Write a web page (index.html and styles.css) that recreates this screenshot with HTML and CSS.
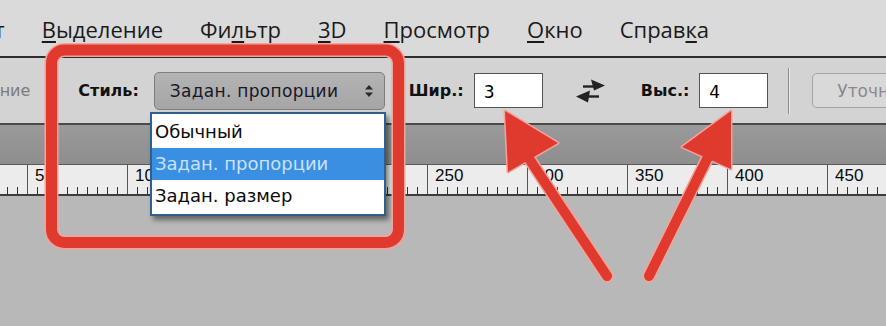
FILE: index.html
```html
<!DOCTYPE html>
<html lang="ru">
<head>
<meta charset="utf-8">
<link rel="stylesheet" href="styles.css">
</head>
<body>
<div class="screen">
  <nav class="menubar">
    <span class="menu-item first">Текст</span>
    <span class="menu-item"><u>В</u>ыделение</span>
    <span class="menu-item">Фи<u>л</u>ьтр</span>
    <span class="menu-item"><u>3</u>D</span>
    <span class="menu-item"><u>П</u>росмотр</span>
    <span class="menu-item"><u>О</u>кно</span>
    <span class="menu-item">Справ<u>к</u>а</span>
  </nav>

  <div class="options">
    <span class="opt-label disabled first">Сглаживание</span>
    <span class="opt-label style-label">Стиль:</span>
    <div class="select">
      <span class="select-text">Задан. пропорции</span>
      <svg class="updown" width="10" height="16" viewBox="0 0 10 16"><path d="M1 6.5 L5 2 L9 6.5 Z M1 9.5 L5 14 L9 9.5 Z" fill="#2a2a2a"/></svg>
    </div>
    <span class="opt-label w-label">Шир.:</span>
    <div class="field">3</div>
    <svg class="swap" width="32" height="26" viewBox="0 0 32 26">
      <path d="M8 8.5 H21" stroke="#222" stroke-width="2.4" fill="none"/>
      <path d="M16 1.5 L30 7.5 L19 12.5 Z" fill="#222"/>
      <path d="M24 18.5 H11" stroke="#222" stroke-width="2.4" fill="none"/>
      <path d="M15 12.5 L1 18.5 L13 24.5 Z" fill="#222"/>
    </svg>
    <span class="opt-label h-label">Выс.:</span>
    <div class="field">4</div>
    <span class="separator"></span>
    <span class="refine">Уточнить край...</span>
  </div>

  <div class="band"></div>

  <div class="ruler">
    <div class="ticks"></div>
    <span class="rlabel">50</span>
    <span class="rlabel">100</span>
    <span class="rlabel">150</span>
    <span class="rlabel">200</span>
    <span class="rlabel">250</span>
    <span class="rlabel">300</span>
    <span class="rlabel">350</span>
    <span class="rlabel">400</span>
    <span class="rlabel">450</span>
  </div>

  <div class="canvas"></div>

  <ul class="dropdown">
    <li class="dd-item">Обычный</li>
    <li class="dd-item active">Задан. пропорции</li>
    <li class="dd-item">Задан. размер</li>
  </ul>

  <svg class="annotation" width="886" height="326" viewBox="0 0 886 326">
    <g fill="none" stroke-linecap="round" stroke-linejoin="round">
      <rect x="51.5" y="50" width="347" height="192.5" rx="13" stroke="#f2a49c" stroke-width="14"/>
      <line x1="607" y1="276" x2="528" y2="157" stroke="#f2a49c" stroke-width="13"/>
      <line x1="649" y1="276" x2="708" y2="157" stroke="#f2a49c" stroke-width="13"/>
    </g>
    <polygon points="505,111 508,172 558,143" fill="#f2a49c" stroke="#f2a49c" stroke-width="3" stroke-linejoin="round"/>
    <polygon points="731,111 682,147 731,169" fill="#f2a49c" stroke="#f2a49c" stroke-width="3" stroke-linejoin="round"/>
    <g fill="none" stroke="#e03a2f" stroke-linecap="round" stroke-linejoin="round">
      <rect x="51.5" y="50" width="347" height="192.5" rx="13" stroke-width="11"/>
      <line x1="607" y1="276" x2="528" y2="157" stroke-width="10"/>
      <line x1="649" y1="276" x2="708" y2="157" stroke-width="10"/>
    </g>
    <polygon points="505,111 508,172 558,143" fill="#e03a2f"/>
    <polygon points="731,111 682,147 731,169" fill="#e03a2f"/>
  </svg>
</div>
</body>
</html>
```

FILE: styles.css
```css
* { box-sizing: border-box; }
html, body { margin: 0; padding: 0; }
body { width: 886px; height: 326px; overflow: hidden; background: #b8b8b8; }

.screen {
  position: relative;
  width: 886px;
  height: 326px;
  overflow: hidden;
  display: flex;
  flex-direction: column;
  background: #b8b8b8;
}

/* ---------- menu bar ---------- */
.menubar {
  height: 58px;
  flex: none;
  display: flex;
  align-items: center;
  gap: 37px;
  padding-top: 2px;
  background: #dadada;
  border-bottom: 2px solid #2e2e2e;
  font-family: "Open Sans", "Noto Sans", sans-serif;
  font-size: 22px;
  color: #1a1a1a;
  white-space: nowrap;
}
.menubar > * { flex: none; }
.menu-item u { text-decoration-thickness: 2px; text-underline-offset: 3px; }
.menu-item.first { margin-left: -52px; }

/* ---------- options bar ---------- */
.options {
  height: 67px;
  flex: none;
  display: flex;
  align-items: center;
  background: #d3d3d3;
  border-bottom: 2px solid #4a4a4a;
  font-family: "DejaVu Sans", sans-serif;
  font-size: 16px;
  color: #111;
  white-space: nowrap;
}
.options > * { flex: none; }
.opt-label { font-weight: bold; }
.opt-label.disabled { font-weight: normal; color: #7c7c7c; }
.opt-label.first { margin-left: -84px; }
.style-label { margin-left: 48px; }
.select {
  margin-left: 15px;
  width: 231px;
  height: 38px;
  display: flex;
  align-items: center;
  justify-content: space-between;
  padding: 0 10px 0 15px;
  border: 1px solid #7d7d7d;
  border-radius: 5px;
  background: linear-gradient(#b4b4b4, #a5a5a5);
  color: #181826;
  font-size: 17px;
  letter-spacing: 0.3px;
}
.w-label { margin-left: 24px; }
.field {
  margin-left: 10px;
  width: 69px;
  height: 35px;
  padding: 8px 0 0 9px;
  background: #fff;
  border: 1px solid #555;
  font-size: 17px;
  color: #000;
}
.swap { margin-left: 32px; }
.h-label { margin-left: 34px; }
.separator {
  margin-left: 20px;
  width: 2px;
  height: 46px;
  border-left: 1px solid #8c8c8c;
  border-right: 1px solid #ececec;
}
.refine {
  margin-left: 22px;
  height: 35px;
  padding: 7px 0 0 24px;
  width: 120px;
  border: 1px solid #a4a4a4;
  border-radius: 5px;
  background: #d9d9d9;
  color: #8a8a8a;
  font-size: 17px;
}

/* ---------- band & ruler ---------- */
.band {
  height: 40px;
  flex: none;
  background: linear-gradient(#9a9a9a, #8e8e8e);
  border-bottom: 1px solid #5a5a5a;
}
.ruler {
  position: relative;
  height: 31px;
  flex: none;
  display: flex;
  padding-left: 35px;
  background: #ececec;
  border-bottom: 2px solid #3c3c3c;
  font-family: "Liberation Sans", sans-serif;
  font-size: 17px;
  color: #0a0a0a;
}
.ticks {
  position: absolute;
  inset: 0;
  background:
    repeating-linear-gradient(90deg, transparent 0 27px, #555 27px 28px, transparent 28px 100px) 0 0 / 100% 100% no-repeat,
    repeating-linear-gradient(90deg, transparent 0 7px, #333 7px 8px, transparent 8px 10px) 0 100% / 100% 7px no-repeat;
}
.rlabel {
  position: relative;
  width: 100px;
  flex: none;
  line-height: 1;
  padding-top: 2px;
}

.canvas { flex: 1; background: #b8b8b8; }

/* ---------- dropdown (overlay) ---------- */
.dropdown {
  position: absolute;
  left: 150px;
  top: 112px;
  width: 236px;
  margin: 0;
  padding: 2px 0;
  list-style: none;
  background: #fff;
  border: 2px solid #2f5f8f;
  box-shadow: 3px 4px 5px rgba(0,0,0,0.45);
  font-family: "DejaVu Sans", sans-serif;
  font-size: 18px;
  color: #0a0a0a;
}
.dd-item {
  height: 32px;
  line-height: 32px;
  padding-left: 3px;
}
.dd-item.active {
  background: #3a8fe2;
  color: #c9e2fb;
}

/* ---------- annotation overlay ---------- */
.annotation { position: absolute; left: 0; top: 0; pointer-events: none; }
```
